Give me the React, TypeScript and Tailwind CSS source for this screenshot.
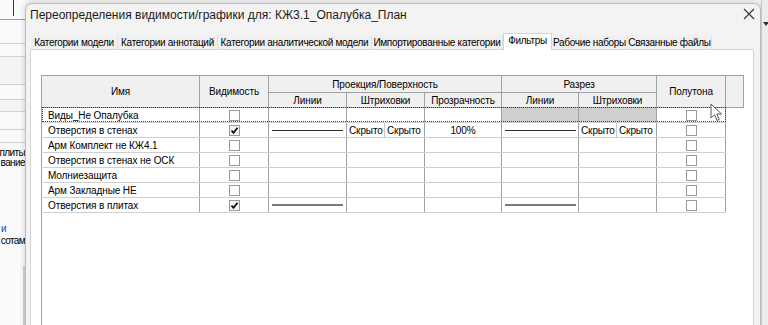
import React from 'react';

type Row = {
  name: string;
  visible: boolean;
  projLine?: 'dark' | 'gray';
  projHatch?: boolean;
  transparency?: string;
  cutLine?: 'dark' | 'gray';
  cutHatch?: boolean;
  cutPattern?: boolean;
};

const ROWS: Row[] = [
  { name: 'Виды_Не Опалубка', visible: false, cutPattern: true },
  { name: 'Отверстия в стенах', visible: true, projLine: 'dark', projHatch: true, transparency: '100%', cutLine: 'dark', cutHatch: true },
  { name: 'Арм Комплект не КЖ4.1', visible: false },
  { name: 'Отверстия в стенах не ОСК', visible: false },
  { name: 'Молниезащита', visible: false },
  { name: 'Арм Закладные НЕ', visible: false },
  { name: 'Отверстия в плитах', visible: true, projLine: 'gray', cutLine: 'gray' },
];

const TABS = [
  { label: 'Категории модели', w: 'w-[87px]' },
  { label: 'Категории аннотаций', w: 'w-[100px]' },
  { label: 'Категории аналитической модели', w: 'w-[154px]' },
  { label: 'Импортированные категории', w: 'w-[131px]' },
  { label: 'Фильтры', w: 'w-[49px]', active: true },
  { label: 'Рабочие наборы', w: 'w-[76px]' },
  { label: 'Связанные файлы', w: 'w-[84px]' },
];

function Checkbox({ checked }: { checked: boolean }) {
  return (
    <div className={`mx-auto w-[11px] h-[11px] border border-[#9a9a9a] flex items-center justify-center ${checked ? 'bg-[#f4f4f4]' : 'bg-white'}`}>
      {checked && (
        <svg width="9" height="9" viewBox="0 0 9 9">
          <path d="M1.5 4.5 L3.5 6.8 L7.5 1.8" fill="none" stroke="#111" strokeWidth="1.8" />
        </svg>
      )}
    </div>
  );
}

function LineSample({ kind }: { kind: 'dark' | 'gray' }) {
  return kind === 'dark'
    ? <div className="mx-auto w-[71px] h-px bg-[#2a2a2a]" />
    : <div className="mx-auto w-[71px] h-[2px] bg-[#7a7a7a]" />;
}

function HiddenPair() {
  return (
    <div className="flex h-full">
      <div className="w-[38px] border-r border-[#c8c8c8] flex items-center pl-[2px]">Скрыто</div>
      <div className="flex-1 flex items-center pl-[2px]">Скрыто</div>
    </div>
  );
}

const th = 'border border-[#a0a0a0] bg-[#f0f0f0] font-normal text-center p-0';
const td = 'border-x border-[#a0a0a0] border-b border-b-[#cfcfcf] p-0 h-[15px]';
const pattern = 'bg-[image:repeating-conic-gradient(#b4b4b4_0_25%,#ececec_0_50%)] bg-[length:2px_2px]';

export default function App() {
  return (
    <div className="w-[768px] h-[325px] overflow-hidden flex bg-[#f3f3f3] text-black font-['Liberation_Sans',Arial,sans-serif]">
      {/* Background app strip on the left */}
      <div className="w-[25px] shrink-0 flex flex-col bg-[#fafafa] text-[10px] leading-[10px] tracking-[-0.6px]">
        <div className="h-[20px] border-b border-[#9c9c9c]">
          <div className="ml-[13px] w-px h-[16px] bg-[#333]" />
        </div>
        <div className="h-[24px] border-b border-[#d0d0d0]" />
        <div className="h-[13px] border-b border-[#d0d0d0]" />
        <div className="h-[28px] border-b border-[#d0d0d0] bg-[#f4f4f4]" />
        <div className="h-[15px] border-b border-[#d0d0d0]" />
        <div className="h-[12px] border-b border-[#d0d0d0] bg-[#f4f4f4]" />
        <div className="h-[18px] border-b border-[#d0d0d0]" />
        <div className="h-[13px] border-b border-[#d0d0d0]" />
        <div className="h-[5px]" />
        <div className="flex justify-end whitespace-nowrap">плиты</div>
        <div className="flex justify-end whitespace-nowrap">вание</div>
        <div className="h-[56px]" />
        <div className="flex justify-start whitespace-nowrap text-[#1a3fc4] pl-[1px]">и</div>
        <div className="flex justify-end whitespace-nowrap mt-[2px]">сотам</div>
        <div className="flex-1 mt-[20px] ml-[23px] border-l-2 border-[#d6d6d6]" />
      </div>

      {/* Dialog */}
      <div className="w-[736px] shrink-0 mt-[3px] h-[330px] rounded-t-[7px] border border-[#bdbdbd] bg-[#f3f3f3] shadow-[0_0_6px_rgba(0,0,0,0.18)] flex flex-col">
        <div className="h-[21px] flex items-center justify-between pl-[4px] pr-[5px]">
          <span className="text-[12px] text-[#1b1b1b]">Переопределения видимости/графики для: КЖ3.1_Опалубка_План</span>
          <svg width="12" height="12" viewBox="0 0 12 12" className="mt-[-2px]">
            <path d="M1 1 L11 11 M11 1 L1 11" stroke="#333" strokeWidth="1.1" />
          </svg>
        </div>

        <div className="mt-[8px] h-[16px] ml-[5px] flex items-end relative z-10 text-[10px] tracking-[-0.3px]">
          {TABS.map((t) =>
            t.active ? (
              <div key={t.label} className={`${t.w} h-[17px] -mb-px bg-white border border-b-0 border-[#d4d4d4] flex items-center justify-center pb-[3px] whitespace-nowrap`}>
                {t.label}
              </div>
            ) : (
              <div key={t.label} className={`${t.w} h-[14px] bg-[#f0f0f0] border-r border-[#e2e2e2] flex items-center justify-center whitespace-nowrap`}>
                {t.label}
              </div>
            ),
          )}
        </div>

        <div className="ml-[4px] w-[724px] flex-1 bg-white border border-[#d4d4d4] pl-[10px] pt-[25px]">
          <div className="relative h-full border-l border-[#a0a0a0]">
            <table className="table-fixed border-collapse w-[702px] -ml-px text-[10px] leading-[13px] tracking-[-0.1px]">
              <colgroup>
                <col className="w-[158px]" />
                <col className="w-[69px]" />
                <col className="w-[78px]" />
                <col className="w-[78px]" />
                <col className="w-[77px]" />
                <col className="w-[77px]" />
                <col className="w-[78px]" />
                <col className="w-[69px]" />
                <col className="w-[18px]" />
              </colgroup>
              <thead>
                <tr className="h-[17px]">
                  <th rowSpan={2} className={th}>Имя</th>
                  <th rowSpan={2} className={th}>Видимость</th>
                  <th colSpan={3} className={th}>Проекция/Поверхность</th>
                  <th colSpan={2} className={th}>Разрез</th>
                  <th rowSpan={2} className={th}>Полутона</th>
                  <th rowSpan={2} className={th} />
                </tr>
                <tr className="h-[15px]">
                  <th className={th}>Линии</th>
                  <th className={th}>Штриховки</th>
                  <th className={th}>Прозрачность</th>
                  <th className={th}>Линии</th>
                  <th className={th}>Штриховки</th>
                </tr>
              </thead>
              <tbody>
                {ROWS.map((r) => (
                  <tr key={r.name}>
                    <td className={`${td} pl-[6px] whitespace-nowrap`}>{r.name}</td>
                    <td className={td}><Checkbox checked={r.visible} /></td>
                    <td className={td}>{r.projLine && <LineSample kind={r.projLine} />}</td>
                    <td className={td}>{r.projHatch && <HiddenPair />}</td>
                    <td className={`${td} text-center`}>{r.transparency}</td>
                    <td className={`${td} ${r.cutPattern ? pattern : ''}`}>
                      {r.cutLine && <LineSample kind={r.cutLine} />}
                    </td>
                    <td className={`${td} ${r.cutPattern ? pattern : ''}`}>
                      {r.cutHatch && <HiddenPair />}
                    </td>
                    <td className={td}><Checkbox checked={false} /></td>
                    <td className="p-0" />
                  </tr>
                ))}
              </tbody>
            </table>

            {/* focus rectangle on the first row */}
            <div className="absolute left-0 top-[32px] w-[684px] h-[15px] border border-dotted border-[#444] pointer-events-none" />

            {/* mouse pointer */}
            <svg width="13" height="19" viewBox="0 0 13 19" className="absolute left-[668px] top-[28px]">
              <path d="M1 1 L1 15 L4.5 11.8 L7 17.5 L9.2 16.5 L6.8 11 L11.5 11 Z" fill="#fff" stroke="#555" strokeWidth="1" strokeLinejoin="round" />
            </svg>
          </div>
        </div>
      </div>

      {/* Background on the right */}
      <div className="flex-1 bg-[#ececec] border-l border-[#c6c6c6] flex flex-col">
        <div className="mt-[22px] ml-[1px] w-0 h-0 border-x-[3px] border-x-transparent border-t-[4px] border-t-[#333]" />
      </div>
    </div>
  );
}
